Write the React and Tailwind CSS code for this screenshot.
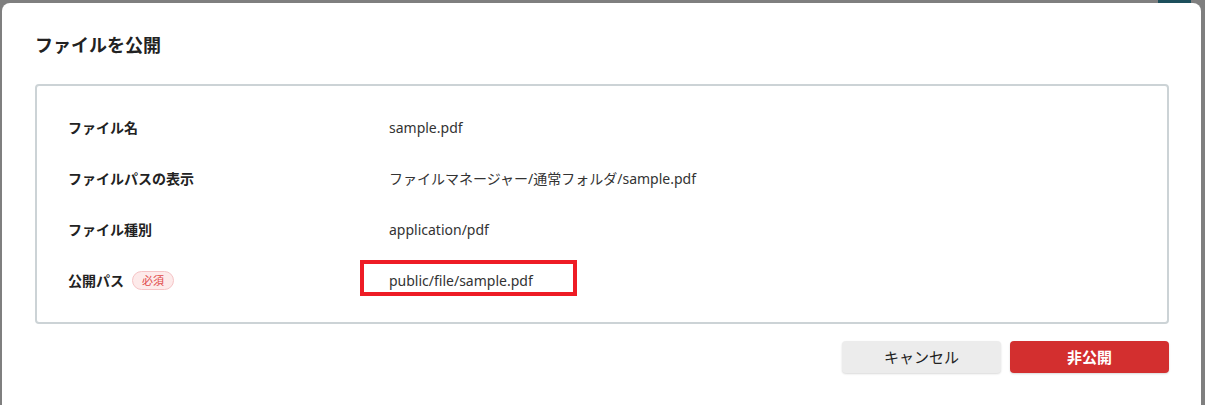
import React from 'react';

const rows = [
  { label: 'ファイル名', value: 'sample.pdf' },
  { label: 'ファイルパスの表示', value: 'ファイルマネージャー/通常フォルダ/sample.pdf' },
  { label: 'ファイル種別', value: 'application/pdf' },
  { label: '公開パス', value: 'public/file/sample.pdf', required: true, highlight: true },
];

export default function App() {
  return (
    <div
      className="h-[405px] w-[1205px] overflow-hidden bg-[#7f7f7f] flex flex-col"
      style={{ fontFamily: '"Noto Sans", "Noto Sans CJK JP", sans-serif' }}
    >
      {/* page behind the overlay peeking at the top */}
      <div className="h-[3px] flex shrink-0">
        <div className="w-[1158px]" />
        <div className="w-[33px] bg-[#1c4f5c]" />
      </div>

      <div className="flex flex-1 pl-[2px] pr-[4px]">
        <div className="flex-1 bg-white rounded-t-[8px] px-[33px] pt-[30px] flex flex-col">
          <h2 className="text-[18px] font-bold text-[#222] leading-[24px]">ファイルを公開</h2>

          <div className="mt-[27px] mr-[-1px] border-2 border-[#ccd3d6] rounded-[4px] py-4 pl-[31px]">
            {rows.map((row) => (
              <div key={row.label} className="flex items-center h-[51px]">
                <div className="w-[321px] flex items-center gap-2 text-sm font-bold text-[#222]">
                  <span>{row.label}</span>
                  {row.required && (
                    <span className="px-[9px] h-[19px] flex items-center rounded-full bg-[#fdeaea] border border-[#f6c4c6] text-[11px] font-normal text-[#e04848]">
                      必須
                    </span>
                  )}
                </div>
                <div className="relative text-sm text-[#333]">
                  {row.highlight && (
                    <span className="absolute left-[-29px] top-[-11px] w-[217px] h-[36px] border-4 border-[#ee1c25]" />
                  )}
                  <span className="relative">{row.value}</span>
                </div>
              </div>
            ))}
          </div>

          <div className="flex justify-end gap-[9px] mt-[17px] mr-[-1px]">
            <button className="w-[159px] h-[32px] rounded-[4px] bg-[#ececec] text-[15px] text-[#222] shadow-[0_1px_2px_rgba(0,0,0,0.15)]">
              キャンセル
            </button>
            <button className="w-[159px] h-[32px] rounded-[4px] bg-[#d32f2f] text-[15px] font-bold text-white shadow-[0_1px_2px_rgba(0,0,0,0.15)]">
              非公開
            </button>
          </div>
        </div>
      </div>
    </div>
  );
}
